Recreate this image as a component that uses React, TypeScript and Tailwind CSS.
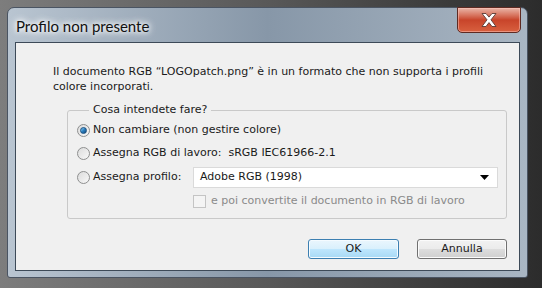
const ui = { fontFamily: '"DejaVu Sans", Tahoma, sans-serif' };

function Radio({ checked }: { checked?: boolean }) {
    return (
        <span className="flex items-center justify-center w-[13px] h-[13px] rounded-full border border-[#8e8f8f] bg-gradient-to-br from-[#dcdcdc] to-[#f8f8f8] shrink-0">
            {checked && (
                <span className="w-[7px] h-[7px] rounded-full bg-gradient-to-br from-[#8cd3f5] via-[#2a7fc0] to-[#13497a] border border-[#194f80]" />
            )}
        </span>
    );
}

function CloseGlyph() {
    return (
        <svg width="20" height="16" viewBox="0 0 20 16">
            <path
                d="M3 1.5h4l3 3.6 3-3.6h4l-5 6.3 5 6.7h-4l-3-3.9-3 3.9H3l5-6.7z"
                fill="#ffffff"
                stroke="#5a3a34"
                strokeWidth="0.9"
                strokeLinejoin="round"
            />
        </svg>
    );
}

export default function App() {
    return (
        <div className="w-[542px] h-[288px] overflow-hidden bg-gradient-to-r from-[#7d7d7d] via-[#585858] to-[#2c2c2c] pt-[7px] pl-[7px]">
            <div
                className="w-[521px] h-[271px] rounded-t-[7px] rounded-b-[3px] border border-[#4a5462] bg-gradient-to-r from-[#b9c5d1] via-[#8797a8] to-[#a9b6c3] flex flex-col px-[7px] pb-[6px]"
                style={ui}
            >
                {/* title bar */}
                <div className="h-[34px] flex items-start justify-between">
                    <span
                        className="mt-[9px] ml-[1px] text-[15px] leading-[18px] text-[#111] [text-shadow:0_0_8px_#ffffff,0_0_8px_#ffffff,0_0_4px_#ffffff]"
                        style={{ fontFamily: 'Lato, "Liberation Sans", sans-serif' }}
                    >
                        Profilo non presente
                    </span>
                    <div className="-mt-px mr-[-1px] w-[64px] h-[26px] rounded-b-[5px] border border-[#5e2a22] bg-gradient-to-b from-[#e8b5a8] via-[#c8442a] to-[#d8603f] flex items-center justify-center shadow-[inset_0_0_0_1px_rgba(255,200,190,0.5)]">
                        <CloseGlyph />
                    </div>
                </div>

                {/* client area */}
                <div className="flex-1 border border-[#3d4a58] bg-[#f0f0f0] flex flex-col text-[11px] text-[#1a1a1a]">
                    <p className="pl-[37px] pr-6 pt-[21px] leading-[15px]">
                        Il documento RGB “LOGOpatch.png” è in un formato che non supporta i profili colore incorporati.
                    </p>

                    <fieldset className="ml-[51px] mr-[12px] mt-[9px] h-[116px] border border-[#c9c9c9] rounded-[3px] pl-[9px] pr-[8px]">
                        <legend className="ml-[12px] px-[4px] leading-[14px]">Cosa intendete fare?</legend>
                        <div className="flex flex-col">
                            <div className="flex items-center gap-[3px] h-[23px] mt-[2px]">
                                <Radio checked />
                                <span>Non cambiare (non gestire colore)</span>
                            </div>
                            <div className="flex items-center gap-[3px] h-[23px]">
                                <Radio />
                                <span>Assegna RGB di lavoro:&nbsp;&nbsp;sRGB IEC61966-2.1</span>
                            </div>
                            <div className="flex items-center gap-[3px] h-[24px]">
                                <Radio />
                                <span className="w-[97px]">Assegna profilo:</span>
                                <div className="flex-1 h-[21px] bg-white border border-[#dadada] flex items-center justify-between pl-[6px] pr-[8px]">
                                    <span>Adobe RGB (1998)</span>
                                    <svg width="9" height="5" viewBox="0 0 9 5">
                                        <path d="M0 0h9L4.5 5z" fill="#000" />
                                    </svg>
                                </div>
                            </div>
                            <div className="flex items-center gap-[5px] h-[24px] pl-[116px]">
                                <span className="w-[13px] h-[13px] border border-[#c4c4c4] bg-[#f4f4f4]" />
                                <span className="text-[#8a8a8a]">e poi convertite il documento in RGB di lavoro</span>
                            </div>
                        </div>
                    </fieldset>

                    <div className="flex justify-end gap-[18px] mr-[12px] mt-[20px]">
                        <button className="w-[91px] h-[20px] rounded-[3px] border border-[#3c7fb1] bg-[linear-gradient(#eaf6fd_0%,#d9f0fc_50%,#bee6fd_51%,#a7d9f5_100%)] leading-[18px] shadow-[inset_0_0_0_1px_#f4fbff]">
                            OK
                        </button>
                        <button className="w-[90px] h-[20px] rounded-[3px] border border-[#707070] bg-[linear-gradient(#f2f2f2_0%,#ebebeb_50%,#dddddd_51%,#cfcfcf_100%)] leading-[18px] shadow-[inset_0_0_0_1px_#fbfbfb]">
                            Annulla
                        </button>
                    </div>
                </div>
            </div>
        </div>
    );
}
